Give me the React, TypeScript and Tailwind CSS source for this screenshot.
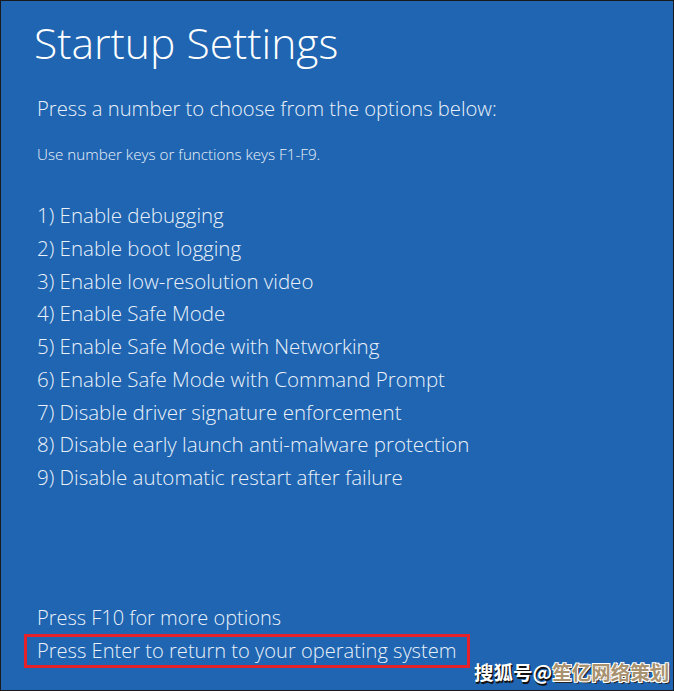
import React from "react";

const options = [
  "1) Enable debugging",
  "2) Enable boot logging",
  "3) Enable low-resolution video",
  "4) Enable Safe Mode",
  "5) Enable Safe Mode with Networking",
  "6) Enable Safe Mode with Command Prompt",
  "7) Disable driver signature enforcement",
  "8) Disable early launch anti-malware protection",
  "9) Disable automatic restart after failure",
];

export default function App() {
  return (
    <div className="w-[674px] h-[691px] bg-[#1f65b1] border border-[#1a1a1a] relative overflow-hidden text-white font-['Open_Sans',sans-serif]">
      <div className="flex flex-col pl-[36px]">
        <h1 className="text-[42.6px] font-light leading-[52px] mt-[15px] ml-[-3px] text-white">Startup Settings</h1>
        <p className="text-[20.2px] font-light leading-[28px] mt-[26px] text-[#eaf1fa]">Press a number to choose from the options below:</p>
        <p className="text-[15.2px] font-light leading-[20px] mt-[22px] text-[#eaf1fa]">Use number keys or functions keys F1-F9.</p>
        <ul className="flex flex-col mt-[35px]">
          {options.map((o) => (
            <li key={o} className="text-[20.5px] font-light leading-[32.75px] text-[#eaf1fa]">{o}</li>
          ))}
        </ul>
      </div>
      <div className="absolute left-0 right-0 top-[600px] flex flex-col">
        <p className="pl-[36px] text-[20px] font-light leading-[33px] text-[#eaf1fa]">Press F10 for more options</p>
        <div className="ml-[23px] w-[446px] h-[34px] border-[3px] border-[#e3222b] flex items-center pl-[10px]">
          <span className="text-[20.1px] font-light leading-[28px] text-[#eaf1fa]">Press Enter to return to your operating system</span>
        </div>
      </div>
      <div className="absolute left-[473px] top-[659px] text-[19.5px] leading-[24px] font-bold font-['Noto_Sans_CJK_SC',sans-serif] whitespace-nowrap">
        <span className="text-white [text-shadow:1px_1px_0_#111,1px_2px_0_#111]">搜狐号@</span>
        <span className="text-[#a8926f] [text-shadow:-1px_-1px_0_#fff,1px_-1px_0_#fff,-1px_1px_0_#fff,1px_1px_0_#fff,2px_2px_0_#222]">笙亿网络策划</span>
      </div>
    </div>
  );
}
